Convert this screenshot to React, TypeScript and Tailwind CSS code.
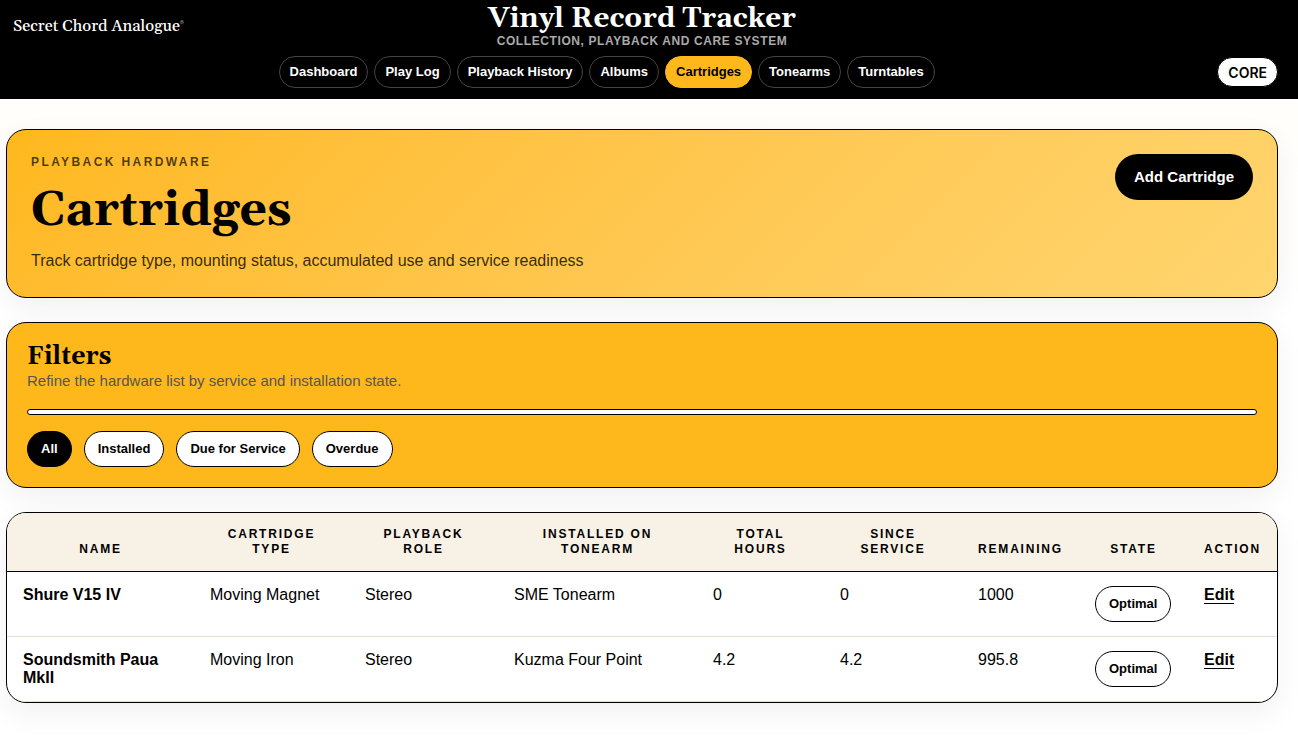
import { useState } from "react";
import clsx from "clsx";

const navItems = ["Dashboard", "Play Log", "Playback History", "Albums", "Cartridges", "Tonearms", "Turntables"];

const filters = ["All", "Installed", "Due for Service", "Overdue"];

const columns = [
  { label: "Name", width: "w-[187px]" },
  { label: "Cartridge Type", width: "w-[155px]" },
  { label: "Playback Role", width: "w-[149px]" },
  { label: "Installed on Tonearm", width: "w-[199px]" },
  { label: "Total Hours", width: "w-[127px]" },
  { label: "Since Service", width: "w-[138px]" },
  { label: "Remaining", width: "w-[117px]" },
  { label: "State", width: "w-[109px]" },
  { label: "Action", width: "w-[89px]" },
];

const cartridges = [
  {
    name: "Shure V15 IV",
    type: "Moving Magnet",
    role: "Stereo",
    tonearm: "SME Tonearm",
    total: 0,
    since: 0,
    remaining: 1000,
    state: "Optimal",
  },
  {
    name: "Soundsmith Paua MkII",
    type: "Moving Iron",
    role: "Stereo",
    tonearm: "Kuzma Four Point",
    total: 4.2,
    since: 4.2,
    remaining: 995.8,
    state: "Optimal",
  },
];

const serif = "font-['Gelasio','Liberation_Serif',serif]";
const card = "rounded-[20px] border border-black shadow-[0_10px_30px_rgba(0,0,0,0.06)]";

function Header() {
  return (
    <header className="relative bg-black pl-[6px] pr-5 pt-[5px] pb-[11px] text-white">
      <a href="#" className={clsx(serif, "absolute left-[13px] top-4 flex items-start text-[16px] leading-5 font-medium")}>
        Secret Chord Analogue
        <span className="text-[4px] leading-3">®</span>
      </a>

      <div className="flex flex-col items-center">
        <p className={clsx(serif, "text-[28px] leading-[29px] font-bold")}>Vinyl Record Tracker</p>
        <p className="text-[12px] leading-[14px] font-bold tracking-wider text-[#aaaaaa] uppercase">
          Collection, playback and care system
        </p>
      </div>

      <div className="mt-2 flex items-center gap-[10px]">
        <nav className="flex flex-1 flex-wrap justify-center gap-[6px]">
          {navItems.map((item) => (
            <a
              key={item}
              href="#"
              className={clsx(
                "flex h-8 items-center rounded-full border px-[10px] text-[13px] font-bold",
                item === "Cartridges" ? "border-[#ffb81c] bg-[#ffb81c] text-black" : "border-[#444444]"
              )}
            >
              {item}
            </a>
          ))}
        </nav>
        <span className="flex h-[30px] items-center rounded-full border border-black bg-white px-[10px] font-['Inter',sans-serif] text-[14px] font-semibold text-black">
          CORE
        </span>
      </div>
    </header>
  );
}

function Hero() {
  return (
    <section
      className={clsx(card, "flex items-start justify-between bg-linear-135 from-[#ffb81c] to-[#ffd56f] p-6")}
    >
      <div>
        <p className="mt-[1px] text-[12px] leading-[14px] font-bold tracking-[0.2em] text-black/70 uppercase">
          Playback Hardware
        </p>
        <h1 className={clsx(serif, "mt-[14px] text-[48px] leading-[56px] font-bold")}>Cartridges</h1>
        <p className="mt-[10px] text-[16px] leading-6 text-black/80">
          Track cartridge type, mounting status, accumulated use and service readiness
        </p>
      </div>
      <button type="button" className="h-[46px] rounded-full bg-black px-[19px] text-[15px] font-bold text-white">
        Add Cartridge
      </button>
    </section>
  );
}

function Filters() {
  const [active, setActive] = useState("All");

  return (
    <section className={clsx(card, "bg-[#ffb81c] p-5")}>
      <h2 className={clsx(serif, "text-[25px] leading-7 font-bold")}>Filters</h2>
      <p className="text-[15px] leading-5 text-[#555555]">Refine the hardware list by service and installation state.</p>
      <div className="mt-[18px] h-[6px] rounded-full border border-black bg-white" />
      <div className="mt-4 flex flex-wrap gap-3">
        {filters.map((filter) => (
          <button
            key={filter}
            type="button"
            onClick={() => setActive(filter)}
            className={clsx(
              "h-9 rounded-full border border-black px-[13px] text-[13px] font-bold",
              filter === active ? "bg-black text-white" : "bg-white text-black"
            )}
          >
            {filter}
          </button>
        ))}
      </div>
    </section>
  );
}

function CartridgeTable() {
  return (
    <section className={clsx(card, "overflow-hidden bg-white")}>
      <table className="w-full table-fixed border-separate border-spacing-0 text-[16px] leading-[18px]">
        <thead className="bg-[#f8f1e5]">
          <tr>
            {columns.map((col) => (
              <th
                key={col.label}
                className={clsx(
                  col.width,
                  "border-b border-black px-4 py-[14px] align-bottom text-[12px] leading-[15px] font-bold tracking-[0.15em] uppercase"
                )}
              >
                {col.label}
              </th>
            ))}
          </tr>
        </thead>
        <tbody className="[&_td]:border-b [&_td]:border-[#e8e0d0] [&_td]:px-4 [&_td]:py-[14px] [&_td]:align-top">
          {cartridges.map((item) => (
            <tr key={item.name}>
              <td className="font-bold">{item.name}</td>
              <td>{item.type}</td>
              <td>{item.role}</td>
              <td>{item.tonearm}</td>
              <td>{item.total}</td>
              <td>{item.since}</td>
              <td>{item.remaining}</td>
              <td>
                <span className="flex h-9 w-fit items-center rounded-full border border-black px-[13px] text-[13px] font-bold">
                  {item.state}
                </span>
              </td>
              <td>
                <a href="#" className="border-b border-black font-bold">
                  Edit
                </a>
              </td>
            </tr>
          ))}
        </tbody>
      </table>
    </section>
  );
}

export default function App() {
  return (
    <div className="min-h-screen bg-linear-to-b from-[#fffdf8] to-white to-40% font-['Liberation_Sans',Arial,sans-serif] text-black">
      <Header />
      <main className="flex flex-col gap-6 pt-[30px] pr-5 pb-10 pl-[6px]">
        <Hero />
        <Filters />
        <CartridgeTable />
      </main>
    </div>
  );
}
